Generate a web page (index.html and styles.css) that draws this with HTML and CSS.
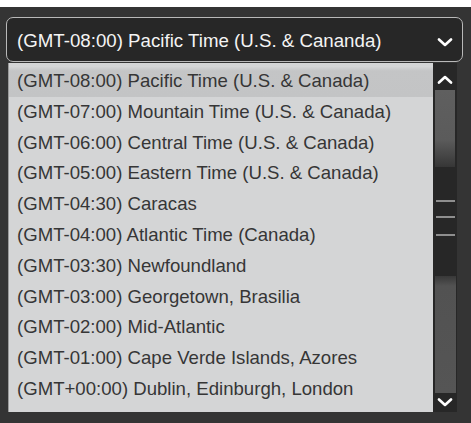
FILE: index.html
```html
<!DOCTYPE html>
<html>
<head>
<meta charset="utf-8">
<link rel="stylesheet" href="styles.css">
</head>
<body>
<div class="panel">
  <div class="select">
    <span class="select-text">(GMT-08:00) Pacific Time (U.S. &amp; Cananda)</span>
    <svg class="chev" width="16" height="9" viewBox="0 0 16 9"><path d="M2 1.5 L8 7 L14 1.5" fill="none" stroke="#fff" stroke-width="2.6" stroke-linecap="round" stroke-linejoin="round"/></svg>
  </div>
  <div class="dropdown">
    <ul class="list">
      <li class="row active">(GMT-08:00) Pacific Time (U.S. &amp; Canada)</li>
      <li class="row">(GMT-07:00) Mountain Time (U.S. &amp; Canada)</li>
      <li class="row">(GMT-06:00) Central Time (U.S. &amp; Canada)</li>
      <li class="row">(GMT-05:00) Eastern Time (U.S. &amp; Canada)</li>
      <li class="row">(GMT-04:30) Caracas</li>
      <li class="row">(GMT-04:00) Atlantic Time (Canada)</li>
      <li class="row">(GMT-03:30) Newfoundland</li>
      <li class="row">(GMT-03:00) Georgetown, Brasilia</li>
      <li class="row">(GMT-02:00) Mid-Atlantic</li>
      <li class="row">(GMT-01:00) Cape Verde Islands, Azores</li>
      <li class="row">(GMT+00:00) Dublin, Edinburgh, London</li>
    </ul>
    <div class="scrollbar">
      <div class="sb-btn sb-up">
        <svg width="16" height="9" viewBox="0 0 16 9"><path d="M2 7.5 L8 2 L14 7.5" fill="none" stroke="#fff" stroke-width="2.6" stroke-linecap="round" stroke-linejoin="round"/></svg>
      </div>
      <div class="thumb"></div>
      <div class="grips">
        <span class="grip"></span>
        <span class="grip"></span>
        <span class="grip"></span>
      </div>
      <div class="track-low"></div>
      <div class="sb-btn sb-down">
        <svg width="16" height="9" viewBox="0 0 16 9"><path d="M2 1.5 L8 7 L14 1.5" fill="none" stroke="#fff" stroke-width="2.6" stroke-linecap="round" stroke-linejoin="round"/></svg>
      </div>
    </div>
  </div>
</div>
</body>
</html>
```

FILE: styles.css
```css
html, body {
  margin: 0;
  padding: 0;
  background: #ffffff;
}

body {
  padding-top: 7px;
  font-family: "Liberation Sans", Arial, sans-serif;
}

.panel {
  height: 416px;
  box-sizing: border-box;
  background: #343434;
  padding: 10px 8px 0 6px;
}

.select {
  height: 45px;
  box-sizing: border-box;
  border: 1.5px solid #b9b9b9;
  border-radius: 7px;
  background: #272727;
  display: flex;
  align-items: center;
  justify-content: space-between;
  padding: 2px 9px 0 10px;
  color: #f4f4f4;
}

.select-text {
  font-size: 18.7px;
}

.chev {
  display: block;
  margin-top: 4px;
}

.dropdown {
  display: flex;
  margin: 1px 0 0 2px;
  width: 449px;
  height: 349px;
}

.list {
  list-style: none;
  margin: 0;
  padding: 3px 0 0 0;
  width: 425px;
  background: #d4d5d6;
  box-sizing: border-box;
  border-left: 1px solid #9a9a9a;
}

.row {
  height: 30.8px;
  line-height: 30.8px;
  padding-left: 8px;
  font-size: 18.6px;
  color: #363636;
  white-space: nowrap;
}

.row.active {
  background: linear-gradient(#d6d7d8 0, #c4c5c6 5px, #c3c4c5 100%);
}

.scrollbar {
  width: 24px;
  background: #272727;
  display: flex;
  flex-direction: column;
  align-items: center;
}

.sb-btn {
  width: 100%;
  display: flex;
  justify-content: center;
}

.sb-btn svg {
  display: block;
}

.sb-up {
  height: 27px;
  align-items: flex-end;
  padding-bottom: 6px;
  box-sizing: border-box;
}

.thumb {
  width: 20px;
  height: 77px;
  background: linear-gradient(#5f5f5f 0, #5b5b5b 65%, #363636 100%);
}

.grips {
  height: 109px;
  padding-top: 33px;
  box-sizing: border-box;
  display: flex;
  flex-direction: column;
  align-items: center;
}

.grip {
  display: block;
  width: 19px;
  height: 2px;
  background: #8e8e8e;
  margin-bottom: 14px;
}

.grip:nth-child(2) {
  margin-bottom: 16px;
}

.track-low {
  width: 21px;
  height: 117px;
  background: linear-gradient(#383838 0, #525252 10px, #555555 100%);
}

.sb-down {
  height: 19px;
  align-items: flex-start;
  padding-top: 5px;
  box-sizing: border-box;
}
```
